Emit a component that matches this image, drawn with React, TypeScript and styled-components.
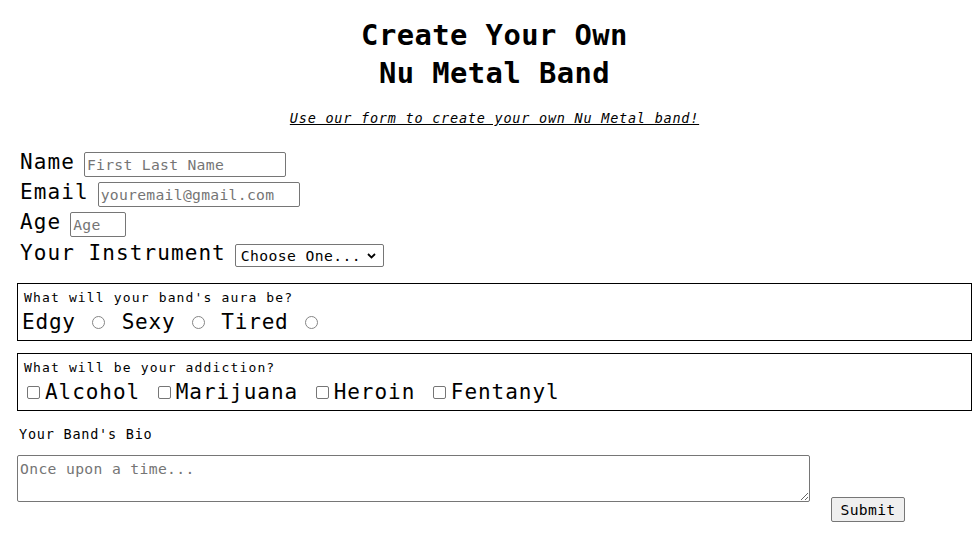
import React from "react";
import styled, { createGlobalStyle } from "styled-components";

const GlobalStyle = createGlobalStyle`
  html, body { margin: 0; padding: 0; background: #fff; }
  body {
    font-family: "DejaVu Sans Mono", "Liberation Mono", monospace;
    color: #000;
  }
  * { box-sizing: border-box; }
`;

const Page = styled.div`
  padding: 17px 8px 0 17px;
`;

const Title = styled.h1`
  margin: 0;
  font-size: 28.8px;
  font-weight: bold;
  line-height: 37.5px;
  letter-spacing: 0.45px;
  text-align: center;
`;

const Tagline = styled.p`
  margin: 17px 0 0;
  font-size: 13.5px;
  line-height: 18px;
  letter-spacing: 0.77px;
  font-style: italic;
  text-decoration: underline;
  text-align: center;
`;

const Form = styled.form`
  margin-top: 22px;
  display: flex;
  flex-direction: column;
`;

const FieldRow = styled.div<{ $h: number }>`
  display: flex;
  align-items: center;
  gap: 9px;
  height: ${(p) => p.$h}px;
  padding-left: 3px;
`;

const FieldLabel = styled.label`
  font-size: 21px;
  line-height: 24px;
  letter-spacing: 1.08px;
  margin-bottom: 5px;
  white-space: nowrap;
`;

const controlText = `
  font-family: "DejaVu Sans Mono", "Liberation Mono", monospace;
  font-size: 14.7px;
  letter-spacing: 0.3px;
  color: #000;
`;

const TextInput = styled.input<{ $w: number }>`
  ${controlText}
  width: ${(p) => p.$w}px;
  height: 25px;
  border: 1px solid #767676;
  border-radius: 2px;
  padding: 1px 2px;
  background: #fff;
  outline: none;
  &::placeholder { color: #757575; opacity: 1; }
`;

const SelectWrap = styled.span`
  position: relative;
  display: inline-flex;
`;

const Select = styled.select`
  ${controlText}
  letter-spacing: 0.4px;
  appearance: none;
  -webkit-appearance: none;
  width: 149px;
  height: 23px;
  border: 1px solid #767676;
  border-radius: 2px;
  padding: 0 0 0 5px;
  background: #fff;
  outline: none;
`;

const Chevron = styled.svg`
  position: absolute;
  right: 8px;
  top: 9px;
  pointer-events: none;
`;

const Group = styled.div<{ $mt: number }>`
  margin-top: ${(p) => p.$mt}px;
  border: 1px solid #000;
  padding: 6px 5px;
`;

const Question = styled.div`
  font-size: 13px;
  line-height: 16px;
  letter-spacing: 1.15px;
  margin: 0 0 4px 1px;
`;

const OptionLine = styled.div<{ $ml: number; $ls: number }>`
  font-size: 21px;
  line-height: 24px;
  letter-spacing: ${(p) => p.$ls}px;
  margin-left: ${(p) => p.$ml}px;
  white-space: nowrap;
`;

const Radio = styled.input.attrs({ type: "radio" })`
  appearance: none;
  -webkit-appearance: none;
  display: inline-block;
  width: 13px;
  height: 13px;
  margin: 3px 3px 0 3px;
  border: 1px solid #858585;
  border-radius: 50%;
  background: #fff;
  vertical-align: baseline;
`;

const Checkbox = styled.input.attrs({ type: "checkbox" })`
  appearance: none;
  -webkit-appearance: none;
  display: inline-block;
  width: 13px;
  height: 13px;
  margin: 3px 5px 0 4px;
  border: 1px solid #767676;
  border-radius: 2px;
  background: #fff;
  vertical-align: baseline;
`;

const BioLabel = styled.label`
  display: block;
  margin-top: 14px;
  font-size: 13.5px;
  line-height: 18px;
  letter-spacing: 0.77px;
  padding-left: 2px;
`;

const BioRow = styled.div`
  display: flex;
  align-items: flex-start;
  margin-top: 12px;
`;

const BioText = styled.textarea`
  ${controlText}
  letter-spacing: 0.35px;
  width: 793px;
  height: 47px;
  border: 1px solid #767676;
  border-radius: 2px;
  padding: 2px;
  line-height: 22px;
  background: #fff;
  outline: none;
  resize: both;
  &::placeholder { color: #757575; opacity: 1; }
`;

const SubmitButton = styled.button`
  ${controlText}
  margin: 42px 0 0 21px;
  width: 74px;
  height: 25px;
  padding: 0;
  border: 1px solid #767676;
  border-radius: 2px;
  background: #efefef;
  text-align: center;
`;

export default function App() {
  return (
    <>
      <GlobalStyle />
      <Page>
        <Title>
          Create Your Own
          <br />
          Nu Metal Band
        </Title>
        <Tagline>Use our form to create your own Nu Metal band!</Tagline>
        <Form onSubmit={(e) => e.preventDefault()}>
          <FieldRow $h={30}>
            <FieldLabel htmlFor="name">Name</FieldLabel>
            <TextInput id="name" $w={202} placeholder="First Last Name" />
          </FieldRow>
          <FieldRow $h={30}>
            <FieldLabel htmlFor="email">Email</FieldLabel>
            <TextInput id="email" $w={202} placeholder="youremail@gmail.com" />
          </FieldRow>
          <FieldRow $h={30}>
            <FieldLabel htmlFor="age">Age</FieldLabel>
            <TextInput id="age" $w={56} placeholder="Age" />
          </FieldRow>
          <FieldRow $h={32}>
            <FieldLabel htmlFor="instrument">Your Instrument</FieldLabel>
            <SelectWrap>
              <Select id="instrument" defaultValue="">
                <option value="">Choose One...</option>
                <option value="guitar">Guitar</option>
                <option value="bass">Bass</option>
                <option value="drums">Drums</option>
                <option value="vocals">Vocals</option>
                <option value="turntables">Turntables</option>
              </Select>
              <Chevron width="9" height="6" viewBox="0 0 9 6">
                <path d="M1 1 L4.5 4.5 L8 1" fill="none" stroke="#000" strokeWidth="1.8" />
              </Chevron>
            </SelectWrap>
          </FieldRow>

          <Group $mt={12}>
            <Question>What will your band's aura be?</Question>
            <OptionLine $ml={-1} $ls={0.8}>
              Edgy <Radio name="aura" /> Sexy <Radio name="aura" /> Tired <Radio name="aura" />
            </OptionLine>
          </Group>

          <Group $mt={12}>
            <Question>What will be your addiction?</Question>
            <OptionLine $ml={0} $ls={0.95}>
              <Checkbox />Alcohol <Checkbox />Marijuana <Checkbox />Heroin <Checkbox />Fentanyl
            </OptionLine>
          </Group>

          <BioLabel htmlFor="bio">Your Band's Bio</BioLabel>
          <BioRow>
            <BioText id="bio" placeholder="Once upon a time..." />
            <SubmitButton type="submit">Submit</SubmitButton>
          </BioRow>
        </Form>
      </Page>
    </>
  );
}
